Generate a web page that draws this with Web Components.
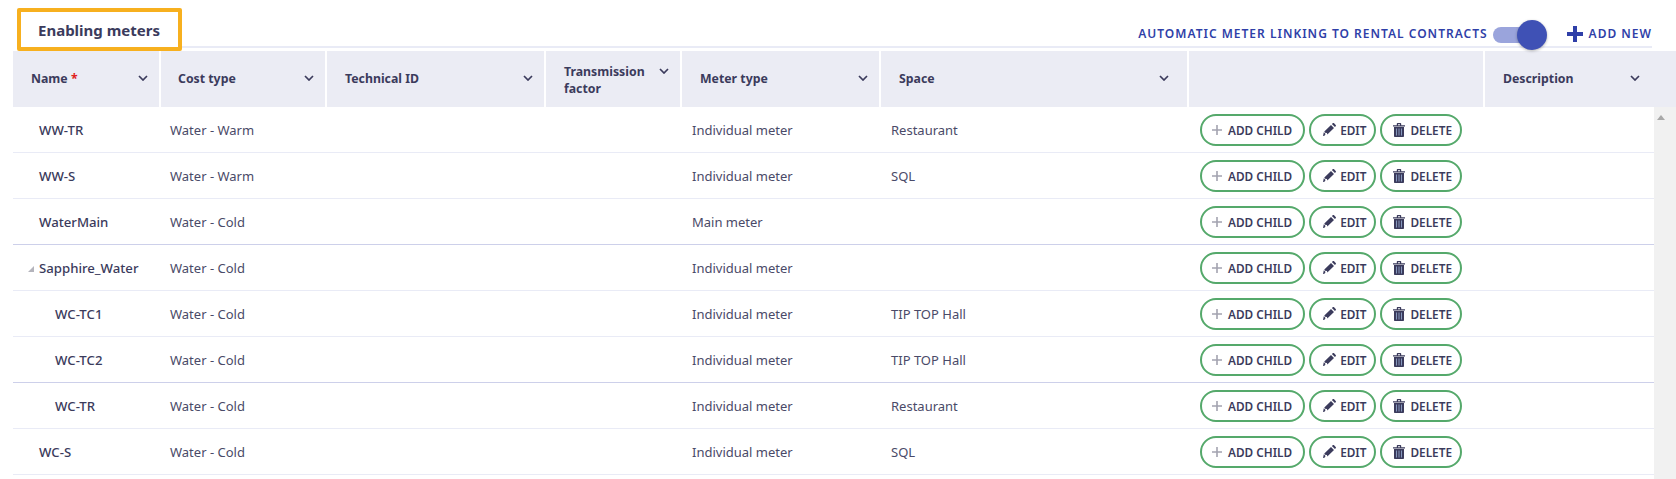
<!DOCTYPE html>
<html>
<head>
<meta charset="utf-8">
<title>Enabling meters</title>
<style>
  html, body { margin: 0; padding: 0; background: #fff; height: 479px; overflow: hidden; }
  body { font-family: "Noto Sans", "Liberation Sans", sans-serif; color: #3b3b5c;
    --cols: 146px 164px 217px 134px 197px 306px 294px 1fr; }
</style>
</head>
<body>
<meter-panel>
  <meter-toolbar title-text="Enabling meters"></meter-toolbar>
  <meter-head></meter-head>
  <meter-body>
    <meter-row name="WW-TR" cost="Water - Warm" type="Individual meter" space="Restaurant"></meter-row>
    <meter-row name="WW-S" cost="Water - Warm" type="Individual meter" space="SQL"></meter-row>
    <meter-row name="WaterMain" cost="Water - Cold" type="Main meter" strong></meter-row>
    <meter-row name="Sapphire_Water" cost="Water - Cold" type="Individual meter" expanded></meter-row>
    <meter-row name="WC-TC1" cost="Water - Cold" type="Individual meter" space="TIP TOP Hall" level="1"></meter-row>
    <meter-row name="WC-TC2" cost="Water - Cold" type="Individual meter" space="TIP TOP Hall" level="1" strong></meter-row>
    <meter-row name="WC-TR" cost="Water - Cold" type="Individual meter" space="Restaurant" level="1"></meter-row>
    <meter-row name="WC-S" cost="Water - Cold" type="Individual meter" space="SQL"></meter-row>
  </meter-body>
</meter-panel>

<script>
const chevron = `<svg width="10" height="6" viewBox="0 0 10 6"><path d="M1 1l4 4 4-4" fill="none" stroke="#3b3b5c" stroke-width="1.7"/></svg>`;

class MeterPanel extends HTMLElement {
  constructor() {
    super();
    this.attachShadow({ mode: 'open' });
    this.shadowRoot.innerHTML = `
      <style>:host{display:flex;flex-direction:column;width:1676px;height:479px;overflow:hidden;}</style>
      <slot></slot>`;
  }
}

class MeterToolbar extends HTMLElement {
  constructor() {
    super();
    this.attachShadow({ mode: 'open' });
  }
  connectedCallback() {
    this.shadowRoot.innerHTML = `
      <style>
        :host{display:flex;align-items:flex-start;height:51px;padding:8px 24px 0 17px;box-sizing:border-box;}
        .title{box-sizing:border-box;width:165px;height:43px;border:4px solid #f7b01f;border-radius:2px;padding-left:17px;
          display:flex;align-items:center;font-size:15px;font-weight:700;color:#3b3b5c;white-space:nowrap;}
        .bar{flex:1;height:40px;box-sizing:border-box;border-bottom:2px solid #e9ebf6;display:flex;align-items:center;justify-content:flex-end;color:#2f3fa8;font-size:12px;font-weight:600;letter-spacing:1px;white-space:nowrap;padding-top:16px;padding-bottom:3px;}
        .toggle{position:relative;width:40px;height:16px;border-radius:8px;background:#9aa4dc;margin:3px 34px 0 5px;}
        .toggle i{position:absolute;right:-14px;top:-7px;width:30px;height:30px;border-radius:50%;background:#3f51b5;box-shadow:0 1px 3px rgba(0,0,0,.3);}
        .add{display:flex;align-items:center;gap:6px;}
      </style>
      <div class="title">${this.getAttribute('title-text')}</div>
      <div class="bar">
        <span>AUTOMATIC METER LINKING TO RENTAL CONTRACTS</span>
        <span class="toggle"><i></i></span>
        <span class="add"><svg width="16" height="16" viewBox="0 0 16 16"><path d="M6 0h4v6h6v4h-6v6H6v-6H0V6h6z" fill="#2f3fa8"/></svg>ADD NEW</span>
      </div>`;
  }
}

class MeterHead extends HTMLElement {
  constructor() {
    super();
    this.attachShadow({ mode: 'open' });
  }
  connectedCallback() {
    const cols = [
      ['Name <b>*</b>', 18, 11], ['Cost type', 17, 11], ['Technical ID', 18, 11], ['Transmission<br>factor', 18, 11, true],
      ['Meter type', 18, 11], ['Space', 18, 18], ['', 0, 0], ['Description', 18, 36]
    ];
    this.shadowRoot.innerHTML = `
      <style>
        :host{display:grid;grid-template-columns:var(--cols);column-gap:2px;height:56px;margin-left:13px;font-size:12.3px;font-weight:700;color:#3b3b5c;}
        .h{background:#ebecf4;display:flex;align-items:center;justify-content:space-between;padding-bottom:2px;line-height:17px;min-width:0;}
        .h svg{flex:none;}
        .h.top span{margin-top:3px;}
        .h.top svg{margin-top:-14px;}
        b{color:#e02020;font-weight:700;}
      </style>
      ${cols.map(c => `<div class="h${c[3] ? ' top' : ''}" style="padding-left:${c[1]}px;padding-right:${c[2]}px"><span>${c[0]}</span>${c[0] ? chevron : ''}</div>`).join('')}`;
  }
}

class MeterBody extends HTMLElement {
  constructor() {
    super();
    this.attachShadow({ mode: 'open' });
    this.shadowRoot.innerHTML = `
      <style>
        :host{display:flex;flex:1;min-height:0;}
        .rows{flex:1;min-width:0;padding-left:13px;display:flex;flex-direction:column;overflow:hidden;}
        .scroll{width:22px;flex:none;background:#f1f1f1;display:flex;padding:8px 0 0 3px;box-sizing:border-box;}
        .scroll i{width:0;height:0;border:4px solid transparent;border-top:0;border-bottom:5px solid #a8a8a8;}
      </style>
      <div class="rows"><slot></slot></div>
      <div class="scroll"><i></i></div>`;
  }
}

class MeterRow extends HTMLElement {
  constructor() {
    super();
    this.attachShadow({ mode: 'open' });
  }
  connectedCallback() {
    const level = +(this.getAttribute('level') || 0);
    const expanded = this.hasAttribute('expanded');
    const strong = this.hasAttribute('strong');
    this.shadowRoot.innerHTML = `
      <style>
        :host{display:grid;grid-template-columns:var(--cols);column-gap:2px;height:46px;box-sizing:border-box;flex:none;
          border-bottom:1px solid ${strong ? '#cdd0ea' : '#e9ebf6'};font-size:13px;color:#4a4a68;align-items:center;white-space:nowrap;width:1663px;}
        .name{font-weight:500;font-size:13.2px;color:#3b3b5c;padding-left:${26 + level * 16}px;display:flex;align-items:center;position:relative;}
        .tw{position:absolute;left:15px;top:50%;margin-top:-2px;width:0;height:0;border-left:6px solid transparent;border-bottom:6px solid #b4b4bc;}
        .cost{padding-left:9px;}
        .type{padding-left:10px;grid-column:5;}
        .space{padding-left:10px;grid-column:6;}
        .acts{grid-column:7;display:flex;gap:4px;padding-left:11px;}
      </style>
      <div class="name">${expanded ? '<i class="tw"></i>' : ''}${this.getAttribute('name')}</div>
      <div class="cost">${this.getAttribute('cost')}</div>
      <div class="type">${this.getAttribute('type')}</div>
      <div class="space">${this.getAttribute('space') || ''}</div>
      <div class="acts">
        <row-button icon="plus">ADD CHILD</row-button>
        <row-button icon="pencil">EDIT</row-button>
        <row-button icon="trash">DELETE</row-button>
      </div>`;
  }
}

const rowIcons = {
  plus: { pad: '0 11px 0 10px', gap: 6, svg: `<svg width="10" height="10" viewBox="0 0 10 10"><path d="M4.2 0h1.6v4.2H10v1.6H5.8V10H4.2V5.8H0V4.2h4.2z" fill="#a3a3b0"/></svg>` },
  pencil: { pad: '0 8px 0 12px', gap: 4, svg: `<svg width="13" height="13" viewBox="0 0 13 13"><path d="M0 13l.8-3.7L2.6 11 1.5 12.7zM1.3 8.6L8 1.9l3 3-6.7 6.7-.3-1.6-2-.2zM8.9 1.1l.8-.8c.4-.4 1-.4 1.4 0l1.6 1.6c.4.4.4 1 0 1.4l-.8.8z" fill="#3b3b5c"/></svg>` },
  trash: { pad: '0 8px 0 11px', gap: 5, svg: `<svg width="12" height="14" viewBox="0 0 12 14"><path d="M0 2.2h12v1.4H0zM3.8 2.2V.7c0-.4.3-.7.7-.7h3c.4 0 .7.3.7.7v1.5H7V1.2H5v1zM1 4h10v9c0 .6-.4 1-1 1H2c-.6 0-1-.4-1-1z" fill="#3b3b5c"/><path d="M3.5 5.5v7M6 5.5v7M8.5 5.5v7" stroke="#8fa3c8" stroke-width=".9"/></svg>` }
};

class RowButton extends HTMLElement {
  constructor() {
    super();
    this.attachShadow({ mode: 'open' });
  }
  connectedCallback() {
    const icon = rowIcons[this.getAttribute('icon')];
    this.shadowRoot.innerHTML = `
      <style>
        :host{display:inline-flex;align-items:center;gap:${icon.gap}px;height:32px;box-sizing:border-box;border:2px solid #55a96b;border-radius:16px;padding:${icon.pad};font-size:11.8px;font-weight:600;color:#3b3b5c;background:#fff;}
      </style>
      ${icon.svg}<slot></slot>`;
  }
}

customElements.define('meter-panel', MeterPanel);
customElements.define('meter-toolbar', MeterToolbar);
customElements.define('meter-head', MeterHead);
customElements.define('meter-body', MeterBody);
customElements.define('meter-row', MeterRow);
customElements.define('row-button', RowButton);
</script>
</body>
</html>
